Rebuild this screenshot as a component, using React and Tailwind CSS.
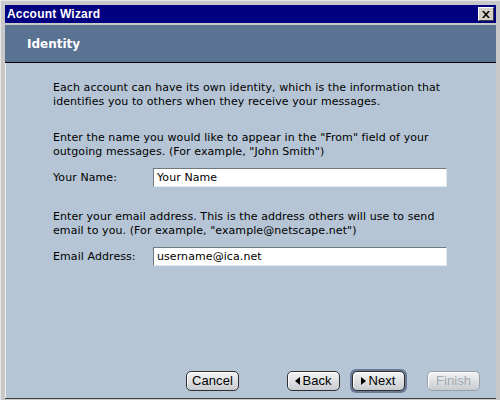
import React from 'react';

const body = { fontFamily: '"DejaVu Sans", Verdana, sans-serif' };
const btnFont = { fontFamily: '"Liberation Sans", Arial, sans-serif' };

function WizButton({ children, disabled, focused }) {
  return (
    <div className={focused ? 'rounded-[6px] p-[2px] bg-[#6c7c98]' : ''}>
      <div
        className={`w-[53px] h-[20px] rounded-[5px] border flex items-center justify-center gap-[2px] text-[13px] bg-gradient-to-b from-[#f4f4f4] to-[#c8ccd0] shadow-[inset_1px_1px_0_#ffffff] ${
          disabled ? 'border-[#98a0a8] text-[#a0a8b0]' : 'border-[#303030] text-black'
        }`}
        style={btnFont}
      >
        {children}
      </div>
    </div>
  );
}

function Arrow({ dir }) {
  return (
    <svg width="5" height="8" viewBox="0 0 5 8">
      <path d={dir === 'left' ? 'M5 0v8L0 4z' : 'M0 0v8l5-4z'} fill="#000" />
    </svg>
  );
}

function Field({ label, value }) {
  return (
    <div className="flex items-center">
      <span className="w-[100px] text-[11px]">{label}</span>
      <div className="w-[294px] h-[19px] bg-white border-t border-l border-[#707880] border-b border-r border-b-[#e0e8f0] border-r-[#e0e8f0] flex items-center pl-[3px] text-[11px]">
        {value}
      </div>
    </div>
  );
}

export default function App() {
  return (
    <div className="w-[500px] h-[400px] bg-[#c8c8c8] px-[4px] pt-[4px] pb-[1px] flex flex-col border-t border-l border-[#e8e8e8]" style={body}>
      {/* Title bar */}
      <div className="h-[18px] bg-[#000080] flex items-center justify-between pl-[2px] pr-[2px]">
        <span className="text-white font-bold text-[12px] tracking-[0.2px]" style={btnFont}>Account Wizard</span>
        <div className="w-[16px] h-[14px] bg-[#d4d0c8] border border-t-white border-l-white border-b-[#404040] border-r-[#404040] flex items-center justify-center">
          <svg width="8" height="7" viewBox="0 0 8 7">
            <path d="M0 0h2l2 2.5L6 0h2L5 3.5 8 7H6L4 4.5 2 7H0l3-3.5z" fill="#000" />
          </svg>
        </div>
      </div>
      <div className="h-[2px]" />
      {/* Header */}
      <div className="h-[38px] bg-[#5b7393] flex items-center pl-[22px] border-b border-black">
        <span className="text-white font-bold text-[12px]">Identity</span>
      </div>
      {/* Content */}
      <div className="flex-1 bg-[#b5c5d5] flex flex-col pl-[47px] pt-[18px] pb-[5px] text-black text-[11px] leading-[14px] tracking-[0.08px] border-l border-[#f0f0f0]">
        <p className="w-[398px]">Each account can have its own identity, which is the information that identifies you to others when they receive your messages.</p>
        <p className="w-[398px] mt-[22px]">Enter the name you would like to appear in the "From" field of your outgoing messages. (For example, "John Smith")</p>
        <div className="mt-[9px]">
          <Field label="Your Name:" value="Your Name" />
        </div>
        <p className="w-[398px] mt-[23px]">Enter your email address. This is the address others will use to send email to you. (For example, "example@netscape.net")</p>
        <div className="mt-[9px]">
          <Field label="Email Address:" value="username@ica.net" />
        </div>
        <div className="flex-1" />
        <div className="flex items-center -ml-[47px] pl-[180px]">
          <WizButton>Cancel</WizButton>
          <div className="ml-[48px]">
            <WizButton>
              <Arrow dir="left" />Back
            </WizButton>
          </div>
          <div className="ml-[10px]">
            <WizButton focused>
              <Arrow dir="right" />Next
            </WizButton>
          </div>
          <div className="ml-[20px]">
            <WizButton disabled>Finish</WizButton>
          </div>
        </div>
      </div>
      <div className="h-[1px] bg-[#404040]" />
    </div>
  );
}
